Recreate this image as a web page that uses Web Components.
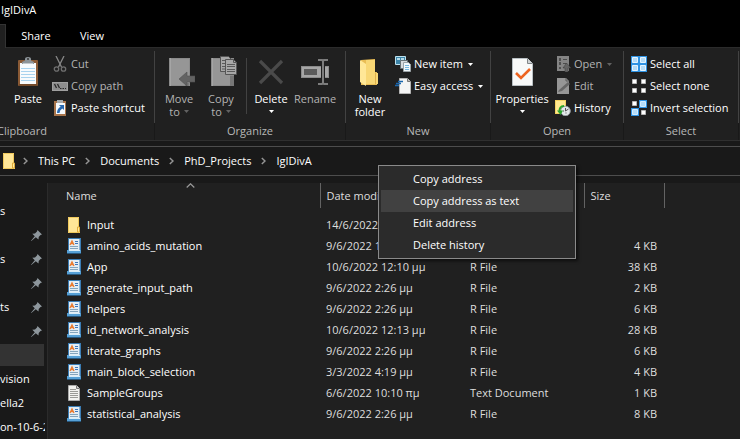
<!DOCTYPE html>
<html lang="en">
<head>
<meta charset="utf-8">
<title>IgIDivA</title>
<style>
  html, body { margin: 0; height: 100%; background: #191919; }
  body { font: 11px/16px "Open Sans", "Noto Sans", sans-serif; color: #fff; overflow: hidden; }
</style>
</head>
<body>
<fx-window></fx-window>

<script>
const LARGE = (body) => `<svg viewBox="0 0 32 32" width="32" height="32" aria-hidden="true">${body}</svg>`;
const SMALL = (body) => `<svg viewBox="0 0 16 16" width="16" height="16" aria-hidden="true">${body}</svg>`;

const ICONS = {
  paste: LARGE(`<rect x="6" y="4" width="20" height="26" rx="1" fill="#8a5a35"/><path d="M7 29h18" stroke="#5d3a20"/>
    <path d="M8 7h16v21H8z" fill="#f8fbfd"/><path d="M9 12.500h14M9 15.500h14M9 18.500h14M9 21.500h14M9 24.500h14" stroke="#a9d3ee"/>
    <path d="M10 8V6l3-1.500V3q0-2 3-2t3 2v1.500L22 6v2z" fill="#8d9499"/><path d="M11 7.500h10" stroke="#c4c9cc"/><circle cx="16" cy="3" r="1" fill="#333"/>`),
  move: LARGE(`<rect x="6" y="2" width="21" height="28" fill="#8b8b8b"/><path d="M8 3h18v26H8z" fill="#969696"/><path d="M7.500 2v28" stroke="#a5a5a5"/>
    <path d="M22 27h4v3h-4z" fill="#7a7a7a"/><path d="M16 23l8-7v4h8v6h-8v4z" fill="#636363" stroke="#505050" stroke-width=".6"/>`),
  copy: LARGE(`<rect x="6" y="2" width="23" height="28" fill="#8b8b8b"/><path d="M8 3h17v26H8z" fill="#969696"/><path d="M7.500 2v28" stroke="#a5a5a5"/><path d="M25 20h4v10h-4z" fill="#777"/>
    <path d="M15.500.5h8l3 3v12h-11z" fill="#a7a7a7" stroke="#555"/><path d="M17 4.500h5M17 7.500h5M17 10.500h5M17 13h5" stroke="#5a5a5a"/>
    <path d="M20.500 3.500h8l3 3v12h-11z" fill="#a7a7a7" stroke="#555"/><path d="M22 8.500h8M22 10.500h8M22 13.500h8M22 15.500h8" stroke="#5a5a5a"/><path d="M28.500 3.500v3h3" fill="none" stroke="#555"/>`),
  remove: LARGE(`<path d="M5 5l22 22M27 5L5 27" stroke="#4a4a4a" stroke-width="3.200"/>`),
  rename: LARGE(`<rect x="2.500" y="10.500" width="27" height="11" fill="#a6a6a6" stroke="#8b8b8b"/><rect x="5" y="13" width="13" height="6" fill="#5b5b5b"/>
    <path d="M22 9h4v14h-4z" fill="#202020"/><path d="M19 4h4l1 1 1-1h4M24 5v22M19 28h4l1-1 1 1h4" fill="none" stroke="#7d7d7d" stroke-width="2"/>`),
  folder: LARGE(`<path d="M7 4l14-1v13h2v13H7z" fill="#e9bd55"/><path d="M12 4h9v13h3v11H12z" fill="#f8d775"/><path d="M6 4l6 4v22l-6-4z" fill="#ffe797"/><path d="M21.500 17v11" stroke="#dfb04b"/>`),
  properties: LARGE(`<path d="M6.500 2.500h15l5 5v22h-20z" fill="#f8f9f9" stroke="#b9c0c4"/><path d="M21.500 2.500v5h5" fill="#cfd3d5" stroke="#808589"/>
    <path d="M10 17l5 5 9-9" fill="none" stroke="#ed6421" stroke-width="2.600"/>`),
  cut: SMALL(`<path d="M4 0l5.500 11M12 0L6.500 11" stroke="#888" stroke-width="1.300"/><circle cx="4.500" cy="13" r="2.200" fill="none" stroke="#6f6f6f" stroke-width="1.300"/><circle cx="11.500" cy="13" r="2.200" fill="none" stroke="#6f6f6f" stroke-width="1.300"/>`),
  path: SMALL(`<rect x=".5" y="4.500" width="15" height="8" fill="#8d8d8d" stroke="#a0a0a0"/><path d="M2.500 6l2 4M5.500 6l2 4" stroke="#292929" stroke-width="1.300"/><path d="M8 10h1.500v1H8zM10.500 10H12v1h-1.500zM13 10h1v1h-1z" fill="#292929"/>`),
  shortcut: SMALL(`<path d="M2 1h12v15H2z" fill="#a7744b"/><path d="M4 3h9v11H4z" fill="#f4f8fc"/><path d="M5 0h6v3H5z" fill="#a7abae"/>
    <path d="M7 5h5v5L10.300 8.400Q7.500 10 7.500 13H5Q5 8.500 8.700 6.800z" fill="#2868b0"/>`),
  newitem: SMALL(`<path d="M.5.500h10v8H.5z" fill="#3c84a8" stroke="#bde1ee"/><path d="M2 2h3v2H2zM6 2h3v2H6z" fill="#b6dcea"/><path d="M5.500 4.500h7v8h-7z" fill="#d8dcdf" stroke="#6a7377"/>
    <path d="M8.500 6.500h5l2 2v7h-7z" fill="#f3f8fb" stroke="#9ba3a7"/><path d="M10 9.500h4M10 11.500h4M10 13.500h4" stroke="#78b8df"/>`),
  easy: SMALL(`<path d="M4.500.5h8l3 3v12h-11z" fill="#f4f4f4" stroke="#b5b5b5"/><path d="M12.500.5v3h3" fill="#bbb" stroke="#777"/><path d="M3 3.500h5M1 5.500h5M0 7.500h4" stroke="#1b66ab" stroke-width="1.300"/>`),
  open: SMALL(`<path d="M2 0h12v15H2z" fill="#858585"/><path d="M4 2h2v3H4zM4 6h2v3H4zM4 11h2v2H4z" fill="#505050"/><path d="M8 3.500h4M8 7.500h4M8 11.500h2" stroke="#4d4d4d"/><path d="M11.500 7l4.500 5h-3v4h-3v-4H8z" fill="#646464" stroke="#3d3d3d" stroke-width=".5"/>`),
  edit: SMALL(`<path d="M2 0h9l3 3v13H2z" fill="#969696"/><path d="M11 0v3h3" fill="none" stroke="#5b5b5b"/><path d="M4 12L13 4l2 2-8 7-4 1z" fill="#666"/>`),
  history: SMALL(`<path d="M0 0h11v14H0z" fill="#f3d060"/><path d="M1 1h9v12H1z" fill="#ffe991"/><circle cx="10.500" cy="11" r="4.800" fill="#e4e8ea" stroke="#92999d"/>
    <path d="M10.500 8v3l3-2M10.500 13h1M8 11h1" fill="none" stroke="#555" stroke-width="1"/><path d="M9 6Q4 6 4.500 12" fill="none" stroke="#2ba32c" stroke-width="2"/><path d="M2 10.500h6L5.500 15z" fill="#2ba32c"/>`),
  all: SMALL(`<path d="M0 0h16v16H0z" fill="#2f93e4"/><path d="M1.500 1.500h5v5h-5zM9.500 1.500h5v5h-5zM1.500 9.500h5v5h-5zM9.500 9.500h5v5h-5z" fill="#b5dcf8" stroke="#e4f4ff"/>`),
  none: SMALL(`<path d="M1.500 1.500h4v4h-4zM10.500 1.500h4v4h-4zM1.500 10.500h4v4h-4zM10.500 10.500h4v4h-4z" fill="#fff" stroke="#b9b9b9"/>`),
  invert: SMALL(`<path d="M8 0h8v8H8zM0 8h8v8H0z" fill="#2f93e4"/><path d="M9.500 1.500h5v5h-5zM1.500 9.500h5v5h-5z" fill="#b5dcf8" stroke="#d3edff"/><path d="M1.500 1.500h4v4h-4zM10.500 10.500h4v4h-4z" fill="#fff" stroke="#b9b9b9"/>`),
  dir: SMALL(`<path d="M2 0h11v16H2z" fill="#f7d979"/><path d="M2 0h11v12h1v4H2z" fill="#ffe697"/><path d="M2.500.5h10v10h1v5h-11z" fill="none" stroke="#f0c95c"/><path d="M11.500 15v-5h2v5z" fill="#ffec9e" stroke="#dfaa3a"/>`),
  rfile: SMALL(`<path d="M2 0h13v13H2z" fill="#3b7db5"/><path d="M1 12h14v3H1z" fill="#56a0d6"/><path d="M1 15h14v1H1z" fill="#28587e"/><path d="M3 1h10.500v12H3z" fill="#e3eef6"/>
    <path d="M4 7l2-4 2 4M4.500 5.500H7" fill="none" stroke="#eb7a2d" stroke-width="1.300"/><path d="M9 3.500h3M9 5.500h3" stroke="#3e76ba"/><path d="M4 8.500h8M4 10.500h8" stroke="#84a5bd"/><path d="M3 12.500h11" stroke="#d9edf8"/>`),
  txt: SMALL(`<path d="M2.500.5h8l3 3v12h-11z" fill="#f2f2ef" stroke="#aaa"/><path d="M10.500.5v3h3" fill="#ccc" stroke="#777"/><path d="M4 4.500h6M4 6.500h8M4 8.500h8M4 10.500h8M4 12.500h8" stroke="#9a9a96"/>`),
  pin: `<svg viewBox="0 0 11 11" width="11" height="11" aria-hidden="true"><path d="M6.500 0L11 4.500 9.500 5 7.700 7 7.500 9.500 4.800 7.200.3 10.900 0 10.700 3.800 6.200 1.300 3.700 4 3.400 6 1.500z" fill="#8e979d"/></svg>`,
  chevron: `<svg viewBox="0 0 5 8" width="5" height="8" aria-hidden="true"><path d="M.8 1L4 4 .8 7" fill="none" stroke="#949494" stroke-width="1.500"/></svg>`,
  sort: `<svg viewBox="0 0 9 5" width="9" height="5" aria-hidden="true"><path d="M.7 4.500l3.800-3.700 3.800 3.700" fill="none" stroke="#9a9a9a" stroke-width="1.200"/></svg>`,
  drop: `<svg viewBox="0 0 5 3" width="5" height="3" aria-hidden="true"><path d="M0 0h5L2.500 3z" fill="currentColor"/></svg>`
};

function define(name, template, setup) {
  customElements.define(name, class extends HTMLElement {
    constructor() {
      super();
      this.attachShadow({ mode: "open" });
    }
    connectedCallback() {
      this.shadowRoot.innerHTML = typeof template === "function" ? template(this) : template;
      if (setup) setup(this.shadowRoot, this);
    }
  });
}

define("fx-icon", (el) => `
  <style>:host { display: inline-flex; flex: none; } svg { display: block; }</style>
  ${ICONS[el.getAttribute("name")] || ""}`);

const BUTTON_RESET = `button { font: inherit; color: inherit; background: none; border: 0; padding: 0; margin: 0; text-align: inherit; }`;

/* Tall ribbon command: picture above a label of one or two lines. */
define("fx-command", (el) => `
  <style>
    ${BUTTON_RESET}
    :host { display: block; flex: none; min-width: 42px; }
    button { display: flex; flex-direction: column; align-items: center; width: 100%; padding-top: 5px; line-height: 13px; text-align: center; }
    button:disabled { color: #b4b4b4; }
    button:disabled .drop { color: #626262; }
    .picture { margin-bottom: 4px; }
    .last { display: flex; align-items: center; gap: 4px; min-height: 13px; }
  </style>
  <button ${el.hasAttribute("disabled") ? "disabled" : ""}>
    <fx-icon class="picture" name="${el.getAttribute("icon")}"></fx-icon>
    <span><slot></slot></span>
    <span class="last"><slot name="second"></slot>${el.hasAttribute("menu") ? '<fx-icon class="drop" name="drop"></fx-icon>' : ""}</span>
  </button>`);

/* One-line ribbon command. */
define("fx-action", (el) => `
  <style>
    ${BUTTON_RESET}
    :host { display: block; }
    button { display: flex; align-items: center; height: 22px; gap: 3px; white-space: nowrap; }
    button:disabled { color: #b4b4b4; }
    button:disabled .drop { color: #626262; }
    .drop { padding-left: 2px; }
  </style>
  <button ${el.hasAttribute("disabled") ? "disabled" : ""}>
    <fx-icon name="${el.getAttribute("icon")}"></fx-icon>
    <span><slot></slot></span>
    ${el.hasAttribute("menu") ? '<fx-icon class="drop" name="drop"></fx-icon>' : ""}
  </button>`);

define("fx-group", (el) => `
  <style>
    :host { display: flex; flex-direction: column; flex: none; box-sizing: border-box; padding-top: 3px; }
    .body { display: flex; height: 72px; border-right: 1px solid #424242; }
    .label { height: 17px; line-height: 16px; text-align: center; color: #b8b8b8; border-right: 1px solid #191919; box-sizing: border-box; }
    ::slotted(.stack) { padding-top: 2px; }
    ::slotted(.rule) { width: 1px; background: #424242; margin: 7px 3px 9px 4px; }
  </style>
  <div class="body"><slot></slot></div>
  <div class="label">${el.getAttribute("label")}</div>`);

define("fx-tabs", `
  <style>
    ${BUTTON_RESET}
    :host { display: flex; height: 23px; background: #000; border-bottom: 1px solid #2b2b2b; }
    .current { width: 5px; height: 24px; background: #202020; border: solid #333; border-width: 1px 1px 0 0; }
    nav { display: flex; padding-left: 2px; }
    button { width: 56px; text-align: center; }
  </style>
  <span class="current"></span>
  <nav><button>Share</button><button>View</button></nav>`);

define("fx-ribbon", `
  <style>
    :host { display: flex; overflow: hidden; background: #202020; border-bottom: 1px solid #2f2f2f; }
    .clipboard { margin-left: -110px; width: 265px; }
    .clipboard .fill { flex: 1; }
    .clipboard fx-command { width: 42px; margin-right: 3px; }
    .clipboard .stack { width: 102px; }
    .organize { width: 191px; }
    .organize fx-command:first-child { margin-left: 3px; }
    .organize fx-command:last-child { margin-left: 2px; }
    .new { width: 145px; }
    .new fx-command { margin: 0 4px 0 3px; }
    .open { width: 133px; }
    .open fx-command { width: 54px; margin: 0 6px 0 4px; }
    .select { width: 115px; }
    .select .stack { margin-left: 7px; }
  </style>
  <fx-group class="clipboard" label="Clipboard">
    <span class="fill"></span>
    <fx-command icon="paste">Paste</fx-command>
    <div class="stack">
      <fx-action icon="cut" disabled>Cut</fx-action>
      <fx-action icon="path" disabled>Copy path</fx-action>
      <fx-action icon="shortcut">Paste shortcut</fx-action>
    </div>
  </fx-group>
  <fx-group class="organize" label="Organize">
    <fx-command icon="move" menu disabled>Move<span slot="second">to</span></fx-command>
    <fx-command icon="copy" menu disabled>Copy<span slot="second">to</span></fx-command>
    <span class="rule"></span>
    <fx-command icon="remove" menu>Delete</fx-command>
    <fx-command icon="rename" disabled>Rename</fx-command>
  </fx-group>
  <fx-group class="new" label="New">
    <fx-command icon="folder">New<span slot="second">folder</span></fx-command>
    <div class="stack">
      <fx-action icon="newitem" menu>New item</fx-action>
      <fx-action icon="easy" menu>Easy access</fx-action>
    </div>
  </fx-group>
  <fx-group class="open" label="Open">
    <fx-command icon="properties" menu>Properties</fx-command>
    <div class="stack">
      <fx-action icon="open" menu disabled>Open</fx-action>
      <fx-action icon="edit" disabled>Edit</fx-action>
      <fx-action icon="history">History</fx-action>
    </div>
  </fx-group>
  <fx-group class="select" label="Select">
    <div class="stack">
      <fx-action icon="all">Select all</fx-action>
      <fx-action icon="none">Select none</fx-action>
      <fx-action icon="invert">Invert selection</fx-action>
    </div>
  </fx-group>`);

define("fx-address", `
  <style>
    :host { display: flex; align-items: center; height: 28px; margin: 5px 0 7px; border: solid #4d4d4d; border-width: 1px 0; background: #191919; padding-left: 1px; }
    a { color: #fff; text-decoration: none; padding: 0 10px; }
    .dir { margin-right: 6px; }
  </style>
  <fx-icon class="dir" name="dir"></fx-icon>
  <fx-icon name="chevron"></fx-icon><a href="#pc">This PC</a>
  <fx-icon name="chevron"></fx-icon><a href="#documents">Documents</a>
  <fx-icon name="chevron"></fx-icon><a href="#projects">PhD_Projects</a>
  <fx-icon name="chevron"></fx-icon><a href="#current">IgIDivA</a>`);

define("fx-nav", `
  <style>
    :host { display: block; width: 45px; flex: none; padding-top: 16px; overflow: hidden; }
    ul { list-style: none; margin: 0; padding: 0; }
    li { display: flex; align-items: center; justify-content: space-between; height: 24px; padding-right: 3px; white-space: nowrap; overflow: hidden; }
    li.selected { background: #333; height: 22px; margin: 1px 1px 1px 0; }
    li.long { padding: 0; }
  </style>
  <ul>
    <li>s</li>
    <li><span></span><fx-icon name="pin"></fx-icon></li>
    <li>s<fx-icon name="pin"></fx-icon></li>
    <li><span></span><fx-icon name="pin"></fx-icon></li>
    <li>ts<fx-icon name="pin"></fx-icon></li>
    <li><span></span><fx-icon name="pin"></fx-icon></li>
    <li class="selected"></li>
    <li>vision</li>
    <li>ella2</li>
    <li class="long">on-10-6-2</li>
  </ul>`);

const FILES = [
  ["dir", "Input", "14/6/2022 12:32 μμ", "File folder", ""],
  ["rfile", "amino_acids_mutation", "9/6/2022 12:26 μμ", "R File", "4 KB"],
  ["rfile", "App", "10/6/2022 12:10 μμ", "R File", "38 KB"],
  ["rfile", "generate_input_path", "9/6/2022 2:26 μμ", "R File", "2 KB"],
  ["rfile", "helpers", "9/6/2022 2:26 μμ", "R File", "6 KB"],
  ["rfile", "id_network_analysis", "10/6/2022 12:13 μμ", "R File", "28 KB"],
  ["rfile", "iterate_graphs", "9/6/2022 2:26 μμ", "R File", "6 KB"],
  ["rfile", "main_block_selection", "3/3/2022 4:19 μμ", "R File", "4 KB"],
  ["txt", "SampleGroups", "6/6/2022 10:10 πμ", "Text Document", "1 KB"],
  ["rfile", "statistical_analysis", "9/6/2022 2:26 μμ", "R File", "8 KB"]
];

define("fx-files", `
  <style>
    :host { display: block; flex: 1; min-width: 0; background: #202020; border-left: 1px solid #2b2b2b; }
    table { border-collapse: collapse; table-layout: fixed; width: 616px; }
    th, td { padding: 0 0 0 6px; text-align: left; font-weight: normal; white-space: nowrap; color: #dedede; }
    th { height: 25px; border-right: 1px solid #636363; box-sizing: border-box; }
    th:first-child { padding-left: 18px; }
    .head { display: grid; grid-template-columns: 120px 1fr; height: 25px; line-height: 25px; }
    td { height: 21px; }
    tbody::before { content: ""; display: block; height: 6px; }
    td:first-child { color: #fff; padding-left: 18px; }
    td:last-child { text-align: right; padding-right: 7px; }
    .name { display: flex; align-items: center; gap: 5px; }
  </style>
  <table>
    <colgroup><col style="width:272px"><col style="width:144px"><col style="width:120px"><col style="width:80px"></colgroup>
    <thead><tr>
      <th scope="col"><div class="head">Name<fx-icon name="sort"></fx-icon></div></th>
      <th scope="col">Date modified</th><th scope="col">Type</th><th scope="col">Size</th>
    </tr></thead>
    <tbody></tbody>
  </table>`, (root) => {
  root.querySelector("tbody").innerHTML = FILES.map(([icon, name, date, type, size]) => `
    <tr><td><div class="name"><fx-icon name="${icon}"></fx-icon>${name}</div></td><td>${date}</td><td>${type}</td><td>${size}</td></tr>`).join("");
});

define("fx-menu", `
  <style>
    ${BUTTON_RESET}
    :host { display: flex; flex-direction: column; box-sizing: border-box; background: #2b2b2b; border: 1px solid #8a8a8a; padding: 2px; box-shadow: 2px 2px 3px #0009; }
    button { height: 22px; padding-left: 32px; }
    button.hot { background: #414141; }
  </style>
  <button role="menuitem">Copy address</button>
  <button role="menuitem" class="hot">Copy address as text</button>
  <button role="menuitem">Edit address</button>
  <button role="menuitem">Delete history</button>`, (root, el) => el.setAttribute("role", "menu"));

define("fx-window", `
  <style>
    :host { display: flex; flex-direction: column; min-height: 100vh; position: relative; }
    header { background: #000; height: 24px; line-height: 20px; padding-left: 1px; }
    main { display: flex; flex: 1; gap: 2px; }
    fx-menu { position: absolute; left: 378px; top: 165px; width: 198px; }
  </style>
  <header>IgIDivA</header>
  <fx-tabs></fx-tabs>
  <fx-ribbon></fx-ribbon>
  <fx-address></fx-address>
  <main><fx-nav></fx-nav><fx-files></fx-files></main>
  <fx-menu></fx-menu>`);
</script>
</body>
</html>
